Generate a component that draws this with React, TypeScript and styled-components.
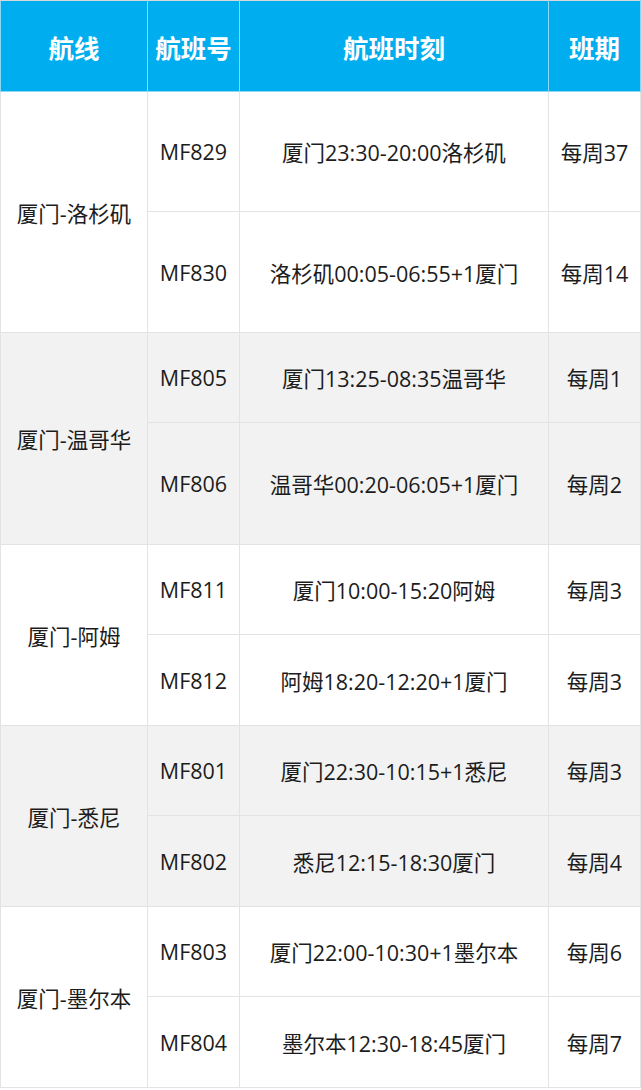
import styled, { createGlobalStyle } from 'styled-components';

const GlobalStyle = createGlobalStyle`
  html, body {
    margin: 0;
    padding: 0;
    background: #ffffff;
  }
`;

const Table = styled.table`
  width: 640px;
  border-collapse: collapse;
  table-layout: fixed;
  font-family: "Open Sans", "Noto Sans CJK SC", sans-serif;
  color: #1c1c1c;
`;

const HeadRow = styled.tr`
  height: 91px;
  background: #00aeef;
`;

const HeadCell = styled.th`
  padding: 0;
  border: 1px solid #d9d9d9;
  border-left-color: #8fd8f5;
  border-right-color: #8fd8f5;
  border-bottom-color: #8fd8f5;
  color: #ffffff;
  font-family: "Noto Sans CJK SC", sans-serif;
  font-size: 25.5px;
  font-weight: 700;
  text-align: center;
  vertical-align: middle;
`;

const Row = styled.tr<{ $shaded: boolean; $height: number }>`
  height: ${(p) => p.$height}px;
  background: ${(p) => (p.$shaded ? '#f2f2f2' : '#ffffff')};
`;

const Cell = styled.td`
  padding: 0;
  border: 1px solid #e3e3e3;
  font-size: 21.5px;
  text-align: center;
  vertical-align: middle;
  white-space: nowrap;
`;

interface Flight {
  no: string;
  time: string;
  days: string;
  height: number;
}

interface Route {
  name: string;
  flights: Flight[];
}

const ROUTES: Route[] = [
  {
    name: '厦门-洛杉矶',
    flights: [
      { no: 'MF829', time: '厦门23:30-20:00洛杉矶', days: '每周37', height: 120 },
      { no: 'MF830', time: '洛杉矶00:05-06:55+1厦门', days: '每周14', height: 121 },
    ],
  },
  {
    name: '厦门-温哥华',
    flights: [
      { no: 'MF805', time: '厦门13:25-08:35温哥华', days: '每周1', height: 90 },
      { no: 'MF806', time: '温哥华00:20-06:05+1厦门', days: '每周2', height: 122 },
    ],
  },
  {
    name: '厦门-阿姆',
    flights: [
      { no: 'MF811', time: '厦门10:00-15:20阿姆', days: '每周3', height: 90 },
      { no: 'MF812', time: '阿姆18:20-12:20+1厦门', days: '每周3', height: 91 },
    ],
  },
  {
    name: '厦门-悉尼',
    flights: [
      { no: 'MF801', time: '厦门22:30-10:15+1悉尼', days: '每周3', height: 90 },
      { no: 'MF802', time: '悉尼12:15-18:30厦门', days: '每周4', height: 91 },
    ],
  },
  {
    name: '厦门-墨尔本',
    flights: [
      { no: 'MF803', time: '厦门22:00-10:30+1墨尔本', days: '每周6', height: 90 },
      { no: 'MF804', time: '墨尔本12:30-18:45厦门', days: '每周7', height: 91 },
    ],
  },
];

export default function App() {
  return (
    <>
      <GlobalStyle />
      <Table>
        <colgroup>
          <col style={{ width: 147 }} />
          <col style={{ width: 92 }} />
          <col style={{ width: 309 }} />
          <col style={{ width: 92 }} />
        </colgroup>
        <thead>
          <HeadRow>
            <HeadCell>航线</HeadCell>
            <HeadCell>航班号</HeadCell>
            <HeadCell>航班时刻</HeadCell>
            <HeadCell>班期</HeadCell>
          </HeadRow>
        </thead>
        <tbody>
          {ROUTES.map((route, gi) =>
            route.flights.map((f, fi) => (
              <Row key={f.no} $shaded={gi % 2 === 1} $height={f.height}>
                {fi === 0 && <Cell rowSpan={route.flights.length}>{route.name}</Cell>}
                <Cell>{f.no}</Cell>
                <Cell>{f.time}</Cell>
                <Cell>{f.days}</Cell>
              </Row>
            )),
          )}
        </tbody>
      </Table>
    </>
  );
}
